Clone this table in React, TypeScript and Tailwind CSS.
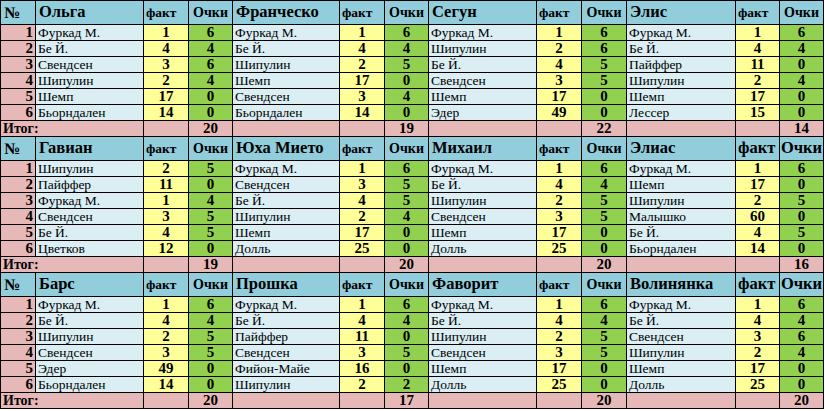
import React from 'react';

type Pick = [string, number, number];
type Team = { name: string; picks: Pick[]; total: number };

const blocks: { teams: Team[]; bigLast: boolean }[] = [
  {
    bigLast: false,
    teams: [
      {
        name: 'Ольга',
        total: 20,
        picks: [
          ['Фуркад М.', 1, 6],
          ['Бе Й.', 4, 4],
          ['Свендсен', 3, 6],
          ['Шипулин', 2, 4],
          ['Шемп', 17, 0],
          ['Бьорндален', 14, 0],
        ],
      },
      {
        name: 'Франческо',
        total: 19,
        picks: [
          ['Фуркад М.', 1, 6],
          ['Бе Й.', 4, 4],
          ['Шипулин', 2, 5],
          ['Шемп', 17, 0],
          ['Свендсен', 3, 4],
          ['Бьорндален', 14, 0],
        ],
      },
      {
        name: 'Сегун',
        total: 22,
        picks: [
          ['Фуркад М.', 1, 6],
          ['Шипулин', 2, 6],
          ['Бе Й.', 4, 5],
          ['Свендсен', 3, 5],
          ['Шемп', 17, 0],
          ['Эдер', 49, 0],
        ],
      },
      {
        name: 'Элис',
        total: 14,
        picks: [
          ['Фуркад М.', 1, 6],
          ['Бе Й.', 4, 4],
          ['Пайффер', 11, 0],
          ['Шипулин', 2, 4],
          ['Шемп', 17, 0],
          ['Лессер', 15, 0],
        ],
      },
    ],
  },
  {
    bigLast: true,
    teams: [
      {
        name: 'Гавиан',
        total: 19,
        picks: [
          ['Шипулин', 2, 5],
          ['Пайффер', 11, 0],
          ['Фуркад М.', 1, 4],
          ['Свендсен', 3, 5],
          ['Бе Й.', 4, 5],
          ['Цветков', 12, 0],
        ],
      },
      {
        name: 'Юха Мието',
        total: 20,
        picks: [
          ['Фуркад М.', 1, 6],
          ['Свендсен', 3, 5],
          ['Бе Й.', 4, 5],
          ['Шипулин', 2, 4],
          ['Шемп', 17, 0],
          ['Долль', 25, 0],
        ],
      },
      {
        name: 'Михаил',
        total: 20,
        picks: [
          ['Фуркад М.', 1, 6],
          ['Бе Й.', 4, 4],
          ['Шипулин', 2, 5],
          ['Свендсен', 3, 5],
          ['Шемп', 17, 0],
          ['Долль', 25, 0],
        ],
      },
      {
        name: 'Элиас',
        total: 16,
        picks: [
          ['Фуркад М.', 1, 6],
          ['Шемп', 17, 0],
          ['Шипулин', 2, 5],
          ['Малышко', 60, 0],
          ['Бе Й.', 4, 5],
          ['Бьорндален', 14, 0],
        ],
      },
    ],
  },
  {
    bigLast: true,
    teams: [
      {
        name: 'Барс',
        total: 20,
        picks: [
          ['Фуркад М.', 1, 6],
          ['Бе Й.', 4, 4],
          ['Шипулин', 2, 5],
          ['Свендсен', 3, 5],
          ['Эдер', 49, 0],
          ['Бьорндален', 14, 0],
        ],
      },
      {
        name: 'Прошка',
        total: 17,
        picks: [
          ['Фуркад М.', 1, 6],
          ['Бе Й.', 4, 4],
          ['Пайффер', 11, 0],
          ['Свендсен', 3, 5],
          ['Фийон-Майе', 16, 0],
          ['Шипулин', 2, 2],
        ],
      },
      {
        name: 'Фаворит',
        total: 20,
        picks: [
          ['Фуркад М.', 1, 6],
          ['Бе Й.', 4, 4],
          ['Шипулин', 2, 5],
          ['Свендсен', 3, 5],
          ['Шемп', 17, 0],
          ['Долль', 25, 0],
        ],
      },
      {
        name: 'Волинянка',
        total: 20,
        picks: [
          ['Фуркад М.', 1, 6],
          ['Бе Й.', 4, 4],
          ['Свендсен', 3, 6],
          ['Шипулин', 2, 4],
          ['Шемп', 17, 0],
          ['Долль', 25, 0],
        ],
      },
    ],
  },
];

const nameWidths = ['w-[108px]', 'w-[107px]', 'w-[108px]', 'w-[109px]'];
const factWidths = ['w-[45px]', 'w-[45px]', 'w-[45px]', 'w-[44px]'];
const pointWidths = ['w-[44px]', 'w-[44px]', 'w-[45px]', 'w-[44px]'];

const cell = "border border-black p-0 leading-none font-['Liberation_Serif',serif]";

const App = () => {
  return (
    <div className="w-[825px] h-[411px] overflow-hidden bg-white font-['Liberation_Serif',serif] text-black">
      <table className="w-[824px] table-fixed border-collapse">
        <colgroup>
          <col className="w-[35px]" />
          {[0, 1, 2, 3].map((i) => (
            <React.Fragment key={i}>
              <col className={nameWidths[i]} />
              <col className={factWidths[i]} />
              <col className={pointWidths[i]} />
            </React.Fragment>
          ))}
        </colgroup>
        <tbody>
          {blocks.map((block, b) => (
            <React.Fragment key={b}>
              <tr className="h-[24px] bg-[#92cddc]">
                <td className={`${cell} pl-[3px] text-[16px] font-bold`}>№</td>
                {block.teams.map((team, t) => {
                  const big = block.bigLast && t === 3;
                  return (
                    <React.Fragment key={t}>
                      <td className={`${cell} pl-[3px] text-[16.5px] font-bold whitespace-nowrap`}>{team.name}</td>
                      <td
                        className={`${cell} pl-[2px] text-left font-bold whitespace-nowrap ${big ? 'text-[16.5px]' : 'text-[13.5px]'}`}
                      >
                        факт
                      </td>
                      <td
                        className={`${cell} text-center font-bold whitespace-nowrap ${big ? 'text-[16.5px]' : 'text-[14px]'}`}
                      >
                        Очки
                      </td>
                    </React.Fragment>
                  );
                })}
              </tr>
              {[0, 1, 2, 3, 4, 5].map((r) => (
                <tr key={r} className="h-[16px]">
                  <td className={`${cell} bg-[#e6b8b7] pr-[2px] text-right text-[15px] font-bold`}>{r + 1}</td>
                  {block.teams.map((team, t) => (
                    <React.Fragment key={t}>
                      <td className={`${cell} bg-[#daeef3] pl-[2px] text-[13.5px] whitespace-nowrap`}>
                        {team.picks[r][0]}
                      </td>
                      <td className={`${cell} bg-[#ffff99] text-center text-[15px] font-bold`}>{team.picks[r][1]}</td>
                      <td className={`${cell} bg-[#92d050] text-center text-[15px] font-bold`}>{team.picks[r][2]}</td>
                    </React.Fragment>
                  ))}
                </tr>
              ))}
              <tr className="h-[16px] bg-[#e6b8b7]">
                <td colSpan={2} className={`${cell} pl-[2px] text-[14px] font-bold`}>
                  Итог:
                </td>
                <td className={cell}></td>
                <td className={`${cell} text-center text-[15px] font-bold`}>{block.teams[0].total}</td>
                {block.teams.slice(1).map((team, t) => (
                  <React.Fragment key={t}>
                    <td className={cell}></td>
                    <td className={cell}></td>
                    <td className={`${cell} text-center text-[15px] font-bold`}>{team.total}</td>
                  </React.Fragment>
                ))}
              </tr>
            </React.Fragment>
          ))}
        </tbody>
      </table>
    </div>
  );
};

export default App;
